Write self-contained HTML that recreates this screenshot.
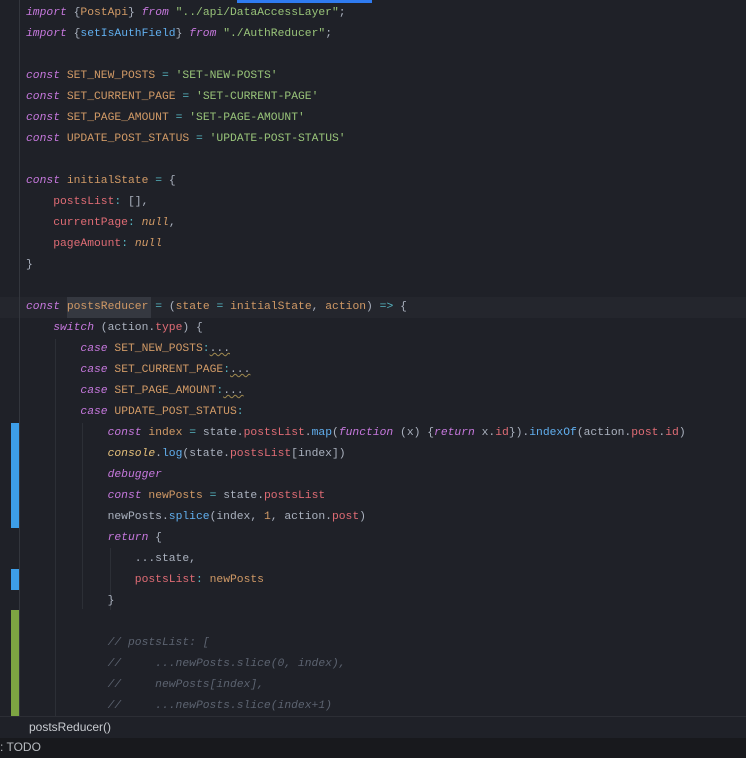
<!DOCTYPE html>
<html><head><meta charset="utf-8"><style>
body{margin:0;width:746px;height:758px;background:#1f2128;overflow:hidden;position:relative;font-family:"Liberation Mono",monospace}
pre{margin:0;position:absolute;left:26px;top:3px;font-family:"Liberation Mono",monospace;font-size:11.33px;line-height:21px;color:#abb2bf;white-space:pre}
.k{color:#c678dd;font-style:italic}.c{color:#d19a66}.s{color:#98c379}.o{color:#56b6c2}.p{color:#e06c75}.f{color:#61afef}.cm{color:#5c6370;font-style:italic}.n{color:#d19a66;font-style:italic}.y{color:#e5c07b;font-style:italic}
.w{text-decoration:underline wavy #a08a50;text-decoration-thickness:1px}
.g{position:absolute;width:1px;background:#2c2f36}
.m{position:absolute;left:11px;width:8px}
</style></head><body>
<div style="position:absolute;left:237px;top:0;width:135px;height:3px;background:#2f7bf0"></div>
<div style="position:absolute;left:0;top:297px;width:746px;height:21px;background:#24262d"></div>
<div style="position:absolute;left:67px;top:297px;width:84px;height:21px;background:#353840"></div>
<div class="g" style="left:19px;top:0;height:716px;background:#33363d"></div>
<div class="g" style="left:55px;top:339px;height:377px"></div>
<div class="g" style="left:82px;top:423px;height:186px"></div>
<div class="g" style="left:110px;top:548px;height:62px"></div>
<div class="m" style="top:423px;height:105px;background:#3d9ee8"></div>
<div class="m" style="top:569px;height:21px;background:#3d9ee8"></div>
<div class="m" style="top:610px;height:106px;background:#7da442"></div>
<pre><span class="k">import</span> {<span class="c">PostApi</span>} <span class="k">from</span> <span class="s">"../api/DataAccessLayer"</span>;
<span class="k">import</span> {<span class="f">setIsAuthField</span>} <span class="k">from</span> <span class="s">"./AuthReducer"</span>;

<span class="k">const</span> <span class="c">SET_NEW_POSTS</span> <span class="o">=</span> <span class="s">'SET-NEW-POSTS'</span>
<span class="k">const</span> <span class="c">SET_CURRENT_PAGE</span> <span class="o">=</span> <span class="s">'SET-CURRENT-PAGE'</span>
<span class="k">const</span> <span class="c">SET_PAGE_AMOUNT</span> <span class="o">=</span> <span class="s">'SET-PAGE-AMOUNT'</span>
<span class="k">const</span> <span class="c">UPDATE_POST_STATUS</span> <span class="o">=</span> <span class="s">'UPDATE-POST-STATUS'</span>

<span class="k">const</span> <span class="c">initialState</span> <span class="o">=</span> {
    <span class="p">postsList</span><span class="o">:</span> [],
    <span class="p">currentPage</span><span class="o">:</span> <span class="n">null</span>,
    <span class="p">pageAmount</span><span class="o">:</span> <span class="n">null</span>
}

<span class="k">const</span> <span class="c">postsReducer</span> <span class="o">=</span> (<span class="c">state</span> <span class="o">=</span> <span class="c">initialState</span>, <span class="c">action</span>) <span class="o">=&gt;</span> {
    <span class="k">switch</span> (action.<span class="p">type</span>) {
        <span class="k">case</span> <span class="c">SET_NEW_POSTS</span><span class="o">:</span><span class="w">...</span>
        <span class="k">case</span> <span class="c">SET_CURRENT_PAGE</span><span class="o">:</span><span class="w">...</span>
        <span class="k">case</span> <span class="c">SET_PAGE_AMOUNT</span><span class="o">:</span><span class="w">...</span>
        <span class="k">case</span> <span class="c">UPDATE_POST_STATUS</span><span class="o">:</span>
            <span class="k">const</span> <span class="c">index</span> <span class="o">=</span> state.<span class="p">postsList</span>.<span class="f">map</span>(<span class="k">function</span> (x) {<span class="k">return</span> x.<span class="p">id</span>}).<span class="f">indexOf</span>(action.<span class="p">post</span>.<span class="p">id</span>)
            <span class="y">console</span>.<span class="f">log</span>(state.<span class="p">postsList</span>[index])
            <span class="k">debugger</span>
            <span class="k">const</span> <span class="c">newPosts</span> <span class="o">=</span> state.<span class="p">postsList</span>
            newPosts.<span class="f">splice</span>(index, <span class="c">1</span>, action.<span class="p">post</span>)
            <span class="k">return</span> {
                ...state,
                <span class="p">postsList</span><span class="o">:</span> <span class="c">newPosts</span>
            }

            <span class="cm">// postsList: [</span>
            <span class="cm">//     ...newPosts.slice(0, index),</span>
            <span class="cm">//     newPosts[index],</span>
            <span class="cm">//     ...newPosts.slice(index+1)</span>
</pre>
<div style="position:absolute;left:0;top:716px;width:746px;height:22px;background:#1f2128;border-top:1px solid #2c2e35;box-sizing:border-box;font-family:'Liberation Sans',sans-serif;font-size:12px;color:#c8cbd0;padding:3px 0 0 29px">postsReducer()</div>
<div style="position:absolute;left:0;top:738px;width:746px;height:20px;background:#18191d;font-family:'Liberation Sans',sans-serif;font-size:12px;color:#b8bbc0;padding:2px 0 0 0;box-sizing:border-box">: TODO</div>
</body></html>
